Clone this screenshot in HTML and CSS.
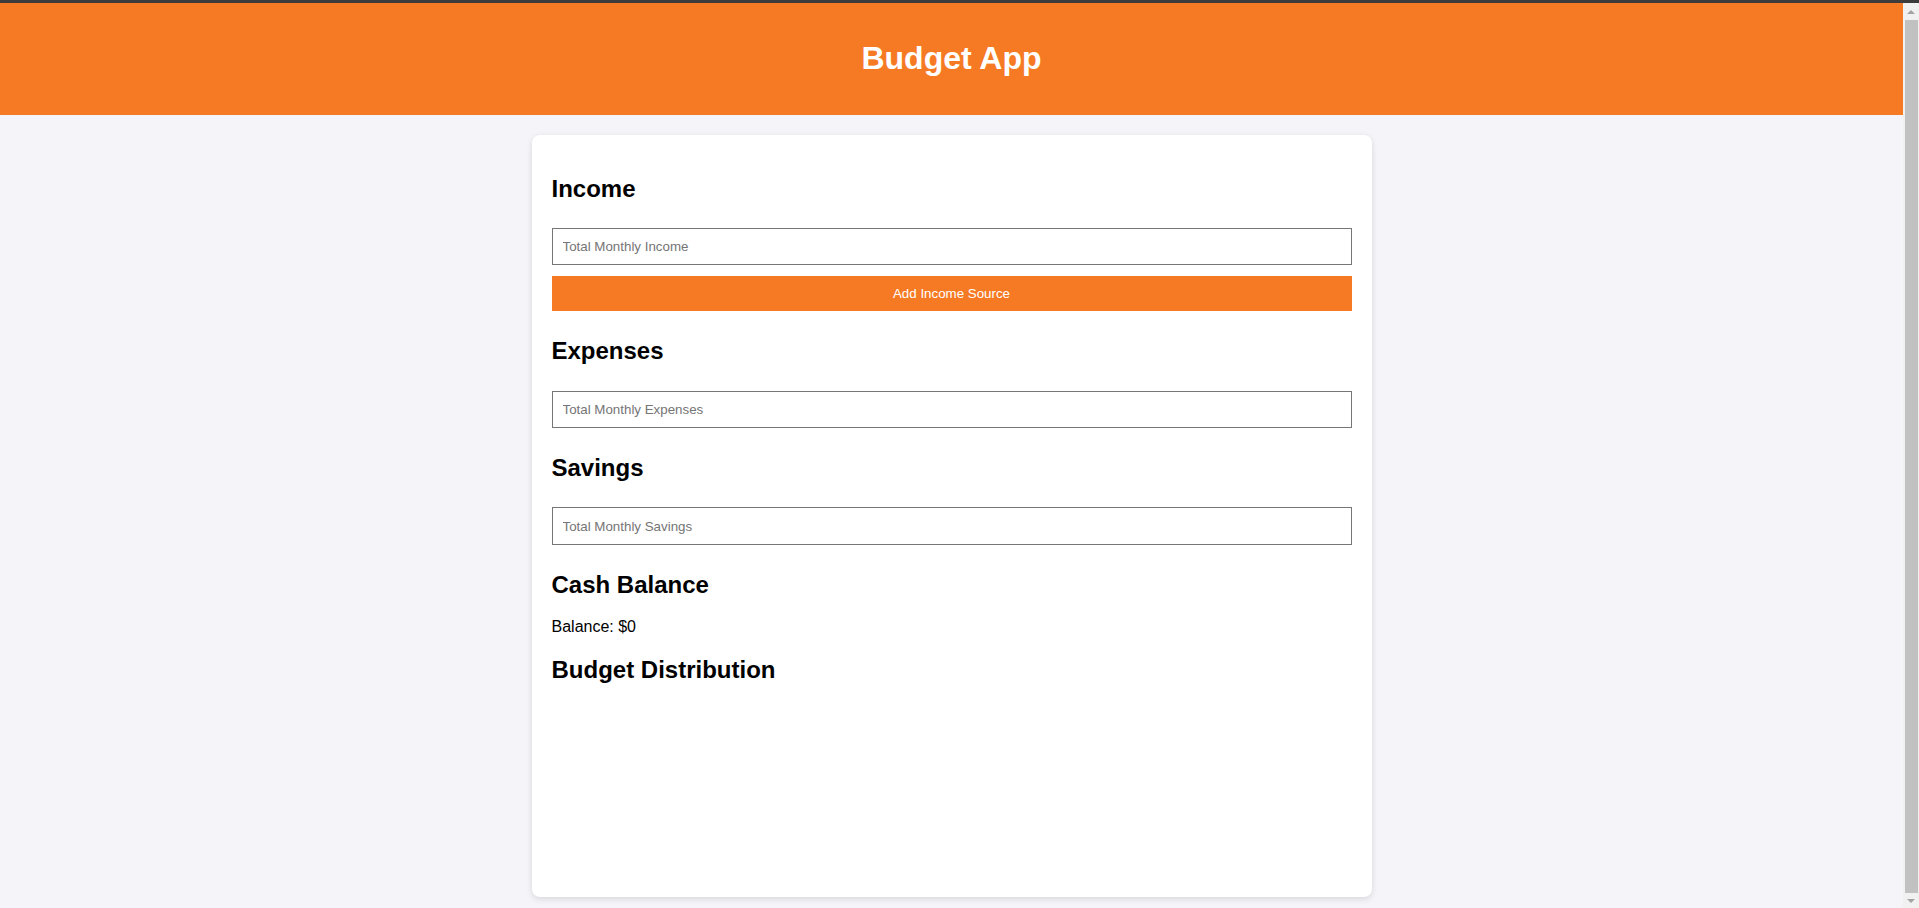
FILE: index.html
```html
<!DOCTYPE html>
<html lang="en">
<head>
<meta charset="utf-8">
<title>Budget App</title>
<link rel="stylesheet" href="styles.css">
</head>
<body>
<div class="topbar"></div>
<div class="viewport">
  <div class="page">
    <header class="app-header">
      <h1 class="app-title">Budget App</h1>
    </header>
    <main class="card">
      <section class="block">
        <h2 class="block-title">Income</h2>
        <input class="field" type="number" placeholder="Total Monthly Income">
        <button class="btn" type="button">Add Income Source</button>
      </section>
      <section class="block">
        <h2 class="block-title">Expenses</h2>
        <input class="field" type="number" placeholder="Total Monthly Expenses">
      </section>
      <section class="block">
        <h2 class="block-title">Savings</h2>
        <input class="field" type="number" placeholder="Total Monthly Savings">
      </section>
      <section class="block">
        <h2 class="block-title">Cash Balance</h2>
        <p class="balance">Balance: $0</p>
      </section>
      <section class="block">
        <h2 class="block-title">Budget Distribution</h2>
        <div class="chart"></div>
      </section>
    </main>
  </div>
  <div class="scrollbar" aria-hidden="true">
    <div class="sb-btn sb-up"><span class="tri tri-up"></span></div>
    <div class="sb-thumb"></div>
    <div class="sb-btn sb-down"><span class="tri tri-down"></span></div>
  </div>
</div>
</body>
</html>
```
FILE: styles.css
```css
html, body {
  height: 100%;
  overflow: hidden;
}
body {
  margin: 0;
  display: flex;
  flex-direction: column;
  background: #f4f4f9;
  font-family: "Liberation Sans", Arial, sans-serif;
  color: #000;
}
.topbar {
  height: 3px;
  flex: none;
  background: #3c3c3c;
}
.viewport {
  flex: 1;
  min-height: 0;
  display: flex;
}
.page {
  flex: 1;
  min-width: 0;
  overflow: hidden;
  background: #f4f4f9;
}
.app-header {
  background: #f67a24;
  color: #fff;
  text-align: center;
  padding: 16px;
}
.app-title {
  font-size: 32px;
  line-height: 1.15;
  margin: 21.44px 0;
  font-weight: bold;
}
.card {
  display: flex;
  flex-direction: column;
  width: 800px;
  margin: 20px auto;
  padding: 20px;
  background: #fff;
  border-radius: 8px;
  box-shadow: 0 2px 6px rgba(0, 0, 0, 0.12);
}
.block {
  display: flex;
  flex-direction: column;
}
.block-title {
  font-size: 24px;
  line-height: 27.6px;
  font-weight: bold;
  margin: 20px 0 0;
}
.field {
  display: block;
  width: 100%;
  height: 37.7px;
  box-sizing: border-box;
  padding: 0 10px;
  margin: 25.5px 0 6px;
  border: 1px solid #767676;
  border-radius: 0;
  font-family: "Liberation Sans", Arial, sans-serif;
  font-size: 13.333px;
  background: #fff;
  appearance: textfield;
}
.field::placeholder {
  color: #757575;
}
.field::-webkit-outer-spin-button,
.field::-webkit-inner-spin-button {
  -webkit-appearance: none;
  margin: 0;
}
.btn {
  display: block;
  width: 100%;
  height: 35px;
  box-sizing: border-box;
  padding: 0 10px;
  margin: 5px 0 6px;
  border: none;
  background: #f67a24;
  color: #fff;
  font-family: "Liberation Sans", Arial, sans-serif;
  font-size: 13.333px;
  cursor: pointer;
}
.field + .btn {
  margin-top: 5px;
}
.block:first-child .field {
  margin-bottom: 6px;
}
.balance {
  font-size: 16px;
  line-height: 18.4px;
  margin: 19px 0 0;
}
.chart {
  height: 173.4px;
  margin-top: 20px;
}
.scrollbar {
  width: 16px;
  flex: none;
  display: flex;
  flex-direction: column;
  background: #f1f1f1;
}
.sb-btn {
  display: flex;
  align-items: center;
  justify-content: center;
  flex: none;
}
.sb-up {
  height: 17px;
}
.sb-down {
  height: 15px;
}
.sb-thumb {
  flex: 1;
  margin: 0 1px 0 2px;
  background: #c1c1c1;
}
.tri {
  width: 0;
  height: 0;
  border-left: 4px solid transparent;
  border-right: 4px solid transparent;
}
.tri-up {
  border-bottom: 4px solid #a3a3a3;
}
.tri-down {
  border-top: 4px solid #a3a3a3;
}
```
